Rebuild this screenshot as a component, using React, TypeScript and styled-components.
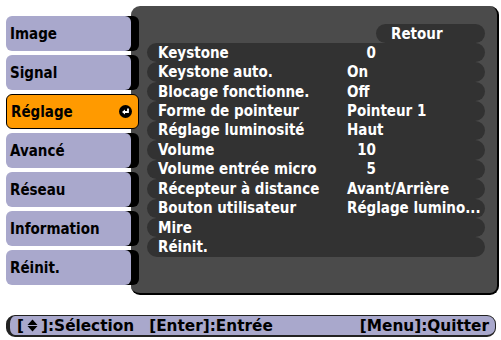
import React from 'react'
import styled, { createGlobalStyle } from 'styled-components'

const GlobalStyle = createGlobalStyle`
  body {
    margin: 0;
    background: #fff;
    font-family: "DejaVu Sans Condensed", "DejaVu Sans", sans-serif;
    font-stretch: condensed;
  }
`

const Screen = styled.div`
  width: 501px;
  height: 340px;
  box-sizing: border-box;
  padding: 6px 2px 0 6px;
  display: flex;
  flex-direction: column;
`

const Main = styled.div`
  display: flex;
  height: 289px;
`

const TabColumn = styled.div`
  width: 125px;
  flex-shrink: 0;
  padding-top: 10px;
  display: flex;
  flex-direction: column;
  gap: 4px;
  position: relative;
  z-index: 1;
`

const Tab = styled.div<{ $active?: boolean }>`
  height: 35px;
  box-sizing: border-box;
  border-radius: 6px;
  padding: 0 6px 0 4px;
  display: flex;
  align-items: center;
  justify-content: space-between;
  font-size: 15px;
  font-weight: bold;
  color: #000;
  background: ${p => (p.$active ? '#ff9a00' : '#a9a8cc')};
  border: ${p => (p.$active ? '1.5px solid #000' : 'none')};
  width: ${p => (p.$active ? '133px' : '125px')};
  box-shadow: ${p => (p.$active ? 'none' : '8px 0 0 #000')};
`

const Panel = styled.div`
  flex: 1;
  background: #4b4b4b;
  border-radius: 9px;
  border-right: 2px solid #000;
  border-bottom: 2px solid #000;
  display: flex;
  flex-direction: column;
  padding: 18px 12px 0 16px;
`

const Retour = styled.div`
  align-self: flex-end;
  width: 109px;
  height: 19px;
  border-radius: 10px;
  background: #323232;
  color: #fff;
  font-size: 15px;
  font-weight: bold;
  display: flex;
  align-items: center;
  padding-left: 15px;
  box-sizing: border-box;
`

const List = styled.div`
  display: flex;
  flex-direction: column;
`

const Row = styled.div`
  height: 19.45px;
  border-radius: 10px;
  background: #323232;
  display: grid;
  grid-template-columns: 189px 1fr;
  align-items: center;
  padding-left: 11px;
  color: #fff;
  font-size: 15px;
  font-weight: bold;
  white-space: nowrap;
`

const Value = styled.span<{ $numeric?: boolean }>`
  display: inline-block;
  width: ${p => (p.$numeric ? '29px' : 'auto')};
  text-align: ${p => (p.$numeric ? 'right' : 'left')};
`

const Footer = styled.div`
  margin-top: 20px;
  width: 490px;
  height: 22px;
  box-sizing: border-box;
  background: #a9a8cc;
  border: 1px solid #222;
  border-bottom-width: 2px;
  border-left: 4px solid #222;
  border-radius: 9px;
  display: flex;
  align-items: center;
  justify-content: space-between;
  padding: 0 6px 0 7px;
  font-family: "DejaVu Sans", sans-serif;
  font-stretch: normal;
  font-size: 15.3px;
  font-weight: bold;
  color: #000;
  white-space: nowrap;
`

const Hint = styled.span`
  display: inline-flex;
  align-items: center;
  margin-right: 15px;
`

const ReturnIcon = () => (
  <svg width="13" height="13" viewBox="0 0 13 13">
    <circle cx="6.5" cy="6.5" r="6.5" fill="#000" />
    <path d="M9 3.5v3.5H5" stroke="#fff" strokeWidth="1.8" fill="none" />
    <path d="M3 7l3-2.6v5.2z" fill="#fff" />
  </svg>
)

const UpDown = () => (
  <svg width="11" height="13" viewBox="0 0 11 13" style={{ margin: '0 3px' }}>
    <path d="M5.5 0.5L10.5 6H0.5z" fill="#000" />
    <path d="M0.5 7H10.5L5.5 12.5z" fill="#000" />
  </svg>
)

const tabs = ['Image', 'Signal', 'Réglage', 'Avancé', 'Réseau', 'Information', 'Réinit.']

const rows: { label: string; value?: string; numeric?: boolean }[] = [
  { label: 'Keystone', value: '0', numeric: true },
  { label: 'Keystone auto.', value: 'On' },
  { label: 'Blocage fonctionne.', value: 'Off' },
  { label: 'Forme de pointeur', value: 'Pointeur 1' },
  { label: 'Réglage luminosité', value: 'Haut' },
  { label: 'Volume', value: '10', numeric: true },
  { label: 'Volume entrée micro', value: '5', numeric: true },
  { label: 'Récepteur à distance', value: 'Avant/Arrière' },
  { label: 'Bouton utilisateur', value: 'Réglage lumino...' },
  { label: 'Mire' },
  { label: 'Réinit.' },
]

const App: React.FC = () => {
  return (
    <Screen>
      <GlobalStyle />
      <Main>
        <TabColumn>
          {tabs.map(t => (
            <Tab key={t} $active={t === 'Réglage'}>
              {t}
              {t === 'Réglage' && <ReturnIcon />}
            </Tab>
          ))}
        </TabColumn>
        <Panel>
          <Retour>Retour</Retour>
          <List>
            {rows.map(r => (
              <Row key={r.label}>
                <span>{r.label}</span>
                <span>{r.value && <Value $numeric={r.numeric}>{r.value}</Value>}</span>
              </Row>
            ))}
          </List>
        </Panel>
      </Main>
      <Footer>
        <span>
          <Hint>[<UpDown />]:Sélection</Hint>
          <Hint>[Enter]:Entrée</Hint>
        </span>
        <span>[Menu]:Quitter</span>
      </Footer>
    </Screen>
  )
}

export default App
